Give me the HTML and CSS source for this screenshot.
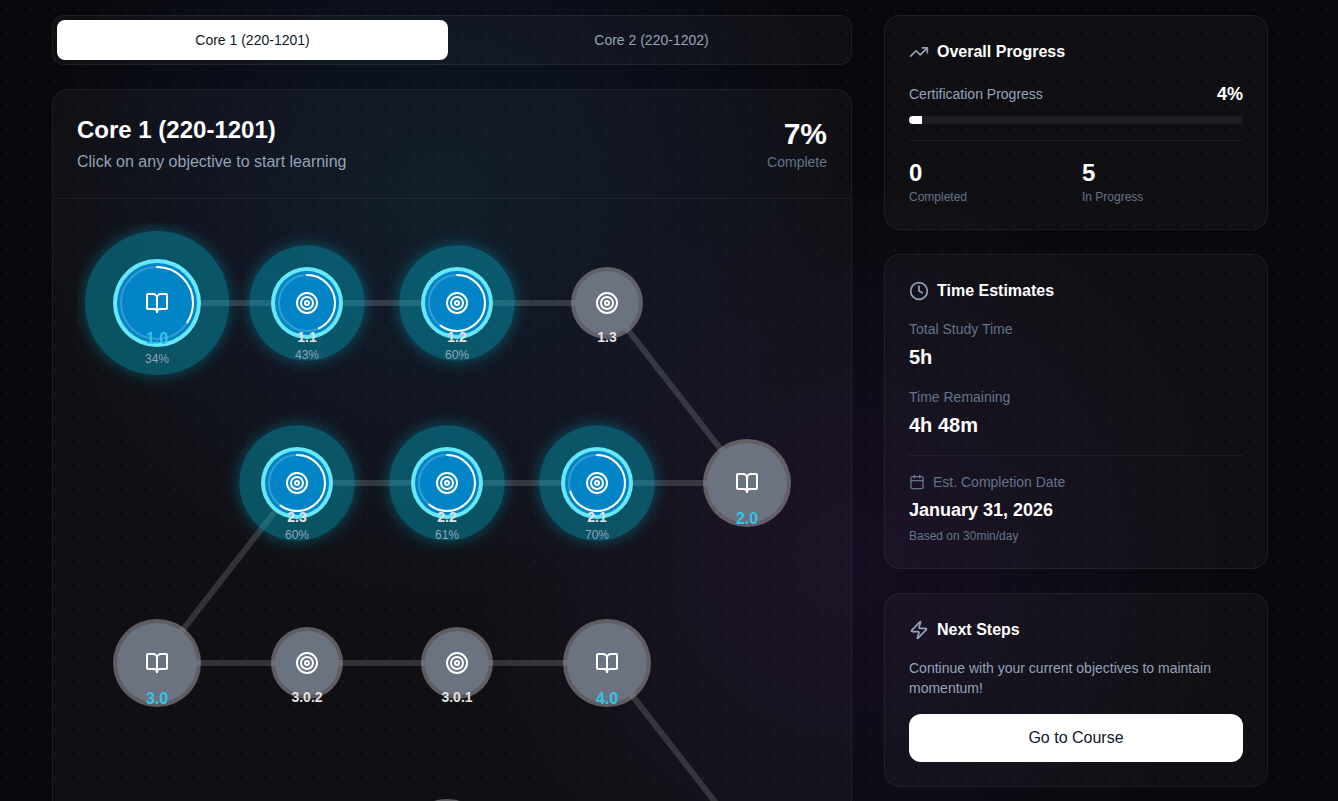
FILE: index.html
```html
<!DOCTYPE html>
<html lang="en">
<head>
    <meta charset="UTF-8">
    <meta name="viewport" content="width=device-width, initial-scale=1.0">
    <title>Core 1 (220-1201)</title>
    <link rel="stylesheet" href="styles.css">
</head>
<body>
    <div class="container">
        <main class="main">
            <div class="tabs panel" role="tablist">
                <button class="tab active" role="tab" aria-selected="true">Core 1 (220-1201)</button>
                <button class="tab" role="tab" aria-selected="false">Core 2 (220-1202)</button>
            </div>

            <section class="card panel">
                <header class="card-header">
                    <div>
                        <h1>Core 1 (220-1201)</h1>
                        <p class="subtitle">Click on any objective to start learning</p>
                    </div>
                    <div class="complete">
                        <div class="complete-value">7%</div>
                        <div class="complete-label">Complete</div>
                    </div>
                </header>
                <div class="roadmap">
                    <svg id="map" viewBox="0 0 750 700" role="img" aria-label="Objective roadmap">
                        <defs>
                            <filter id="glow" x="-50%" y="-50%" width="200%" height="200%">
                                <feGaussianBlur stdDeviation="8" result="blur"/>
                                <feMerge>
                                    <feMergeNode in="blur"/>
                                    <feMergeNode in="SourceGraphic"/>
                                </feMerge>
                            </filter>
                            <symbol id="book" viewBox="0 0 24 24">
                                <path d="M12 7v14"/>
                                <path d="M3 18a1 1 0 0 1-1-1V4a1 1 0 0 1 1-1h5a4 4 0 0 1 4 4 4 4 0 0 1 4-4h5a1 1 0 0 1 1 1v13a1 1 0 0 1-1 1h-6a3 3 0 0 0-3 3 3 3 0 0 0-3-3z"/>
                            </symbol>
                            <symbol id="target" viewBox="0 0 24 24">
                                <circle cx="12" cy="12" r="10"/>
                                <circle cx="12" cy="12" r="6"/>
                                <circle cx="12" cy="12" r="2"/>
                            </symbol>
                        </defs>
                    </svg>
                </div>
            </section>
        </main>

        <aside class="sidebar">
            <section class="side-card panel">
                <h2>
                    <svg class="icon" viewBox="0 0 24 24"><path d="M22 7 13.5 15.5 8.5 10.5 2 17"/><path d="M16 7h6v6"/></svg>
                    Overall Progress
                </h2>
                <div class="row">
                    <span class="muted">Certification Progress</span>
                    <span class="percent">4%</span>
                </div>
                <div class="bar"><div class="bar-fill" style="width: 4%"></div></div>
                <div class="stats">
                    <div>
                        <div class="stat-value">0</div>
                        <div class="small">Completed</div>
                    </div>
                    <div>
                        <div class="stat-value">5</div>
                        <div class="small">In Progress</div>
                    </div>
                </div>
            </section>

            <section class="side-card panel">
                <h2>
                    <svg class="icon" viewBox="0 0 24 24"><circle cx="12" cy="12" r="10"/><path d="M12 6v6l4 2"/></svg>
                    Time Estimates
                </h2>
                <div class="estimates">
                    <div>
                        <div class="label">Total Study Time</div>
                        <div class="value">5h</div>
                    </div>
                    <div>
                        <div class="label">Time Remaining</div>
                        <div class="value">4h 48m</div>
                    </div>
                    <div class="completion">
                        <div class="label with-icon">
                            <svg class="icon-small" viewBox="0 0 24 24"><path d="M8 2v4M16 2v4M3 10h18"/><rect x="3" y="4" width="18" height="18" rx="2"/></svg>
                            Est. Completion Date
                        </div>
                        <div class="date">January 31, 2026</div>
                        <div class="small">Based on 30min/day</div>
                    </div>
                </div>
            </section>

            <section class="side-card panel">
                <h2>
                    <svg class="icon" viewBox="0 0 24 24"><path d="M4 14a1 1 0 0 1-.78-1.63l9.9-10.2a.5.5 0 0 1 .86.46l-1.92 6.02A1 1 0 0 0 13 10h7a1 1 0 0 1 .78 1.63l-9.9 10.2a.5.5 0 0 1-.86-.46l1.92-6.02A1 1 0 0 0 11 14z"/></svg>
                    Next Steps
                </h2>
                <p class="muted">Continue with your current objectives to maintain momentum!</p>
                <button class="go">Go to Course</button>
            </section>
        </aside>
    </div>

<script src="script.js"></script>
</body>
</html>
```

FILE: styles.css
```css
* {
    box-sizing: border-box;
}

body {
    margin: 0;
    padding: 15px 18px 0 0;
    min-height: 100vh;
    background:
        radial-gradient(circle at 7px 10px, rgba(200, 210, 255, 0.05) 1px, transparent 1px) 0 0 / 24px 24px,
        radial-gradient(circle at 440px 200px, rgba(14, 100, 160, 0.15), rgba(30, 64, 150, 0.1) 220px, transparent 400px),
        radial-gradient(circle at 850px 560px, rgba(100, 30, 150, 0.15), rgba(80, 40, 140, 0.08) 200px, transparent 380px),
        #09090d;
    font-family: "Liberation Sans", Arial, sans-serif;
    color: #fff;
}

h1, h2, p {
    margin: 0;
}

button {
    font-family: inherit;
    cursor: pointer;
    border: none;
}

svg {
    fill: none;
    stroke-linecap: round;
    stroke-linejoin: round;
}

.container {
    max-width: 1280px;
    margin: 0 auto;
    padding: 0 32px;
    display: grid;
    grid-template-columns: repeat(3, 1fr);
    gap: 32px;
}

.main {
    grid-column: span 2;
}

.panel {
    background: rgba(255, 255, 255, 0.03);
    border: 1px solid rgba(255, 255, 255, 0.06);
    border-radius: 16px;
}

.tabs {
    display: flex;
    gap: 8px;
    padding: 4px;
    margin-bottom: 24px;
    border-radius: 12px;
}

.tab {
    flex: 1;
    height: 40px;
    border-radius: 8px;
    background: transparent;
    color: #94a3b8;
    font-size: 14px;
}

.tab.active {
    background: #fff;
    color: #0f172a;
}

.card-header {
    display: flex;
    justify-content: space-between;
    align-items: center;
    padding: 24px;
    border-bottom: 1px solid rgba(255, 255, 255, 0.06);
}

h1 {
    font-size: 24px;
    line-height: 32px;
    margin-bottom: 4px;
}

.subtitle {
    font-size: 16px;
    line-height: 24px;
    color: #94a3b8;
}

.complete {
    text-align: right;
}

.complete-value {
    font-size: 30px;
    line-height: 36px;
    font-weight: bold;
}

.complete-label {
    font-size: 14px;
    line-height: 20px;
    color: #64748b;
}

.roadmap {
    padding: 24px;
}

.roadmap svg {
    display: block;
    width: 100%;
}

/* roadmap nodes */
.link {
    stroke: rgba(255, 255, 255, 0.15);
    stroke-width: 6;
}

.halo {
    fill: #06b6d4;
    opacity: 0.4;
}

.ring {
    fill: rgba(160, 156, 160, 0.55);
}

.disc {
    fill: #6b7280;
}

.started .ring {
    fill: #67e8f9;
}

.started .disc {
    fill: #0284c7;
}

.track {
    stroke: rgba(255, 255, 255, 0.2);
    stroke-width: 2;
}

.arc {
    stroke: #fff;
    stroke-width: 2;
}

.glyph {
    stroke: #fff;
    stroke-width: 2;
}

.name {
    fill: #e2e2e2;
    font-size: 14px;
    font-weight: bold;
    text-anchor: middle;
}

.major .name {
    fill: #33c3e8;
    font-size: 16px;
}

.done {
    fill: #94a3b8;
    font-size: 12px;
    text-anchor: middle;
}

/* sidebar */
.sidebar {
    display: flex;
    flex-direction: column;
    gap: 24px;
}

.side-card {
    padding: 24px;
}

h2 {
    display: flex;
    align-items: center;
    gap: 8px;
    font-size: 16px;
    line-height: 24px;
    margin-bottom: 16px;
}

.icon {
    width: 20px;
    height: 20px;
    stroke: #94a3b8;
    stroke-width: 2;
}

.icon-small {
    width: 16px;
    height: 16px;
    stroke: #64748b;
    stroke-width: 2;
}

.row {
    display: flex;
    justify-content: space-between;
    align-items: center;
    margin-bottom: 8px;
}

.muted {
    font-size: 14px;
    line-height: 20px;
    color: #94a3b8;
}

.percent {
    font-size: 18px;
    line-height: 28px;
    font-weight: bold;
}

.bar {
    height: 8px;
    border-radius: 4px;
    background: rgba(255, 255, 255, 0.06);
    overflow: hidden;
}

.bar-fill {
    height: 100%;
    background: #fff;
}

.stats {
    display: grid;
    grid-template-columns: 1fr 1fr;
    gap: 12px;
    margin-top: 16px;
    padding-top: 16px;
    border-top: 1px solid rgba(255, 255, 255, 0.06);
}

.stat-value {
    font-size: 24px;
    line-height: 32px;
    font-weight: bold;
}

.small {
    font-size: 12px;
    line-height: 16px;
    color: #64748b;
}

.estimates {
    display: flex;
    flex-direction: column;
    gap: 16px;
}

.label {
    font-size: 14px;
    line-height: 20px;
    color: #64748b;
    margin-bottom: 4px;
}

.with-icon {
    display: flex;
    align-items: center;
    gap: 8px;
}

.value {
    font-size: 20px;
    line-height: 28px;
    font-weight: bold;
}

.completion {
    padding-top: 16px;
    border-top: 1px solid rgba(255, 255, 255, 0.06);
}

.date {
    font-size: 18px;
    line-height: 28px;
    font-weight: bold;
    margin-bottom: 4px;
}

.go {
    width: 100%;
    height: 48px;
    margin-top: 16px;
    border-radius: 12px;
    background: #fff;
    color: #0f172a;
    font-size: 16px;
}
```

FILE: script.js
```js
const nodes = [
    { name: "1.0", x: 80, y: 80, major: true, done: 34 },
    { name: "1.1", x: 230, y: 80, done: 43 },
    { name: "1.2", x: 380, y: 80, done: 60 },
    { name: "1.3", x: 530, y: 80 },
    { name: "2.0", x: 670, y: 260, major: true },
    { name: "2.1", x: 520, y: 260, done: 70 },
    { name: "2.2", x: 370, y: 260, done: 61 },
    { name: "2.3", x: 220, y: 260, done: 60 },
    { name: "3.0", x: 80, y: 440, major: true },
    { name: "3.0.2", x: 230, y: 440 },
    { name: "3.0.1", x: 380, y: 440 },
    { name: "4.0", x: 530, y: 440, major: true },
    { x: 670, y: 620 },
    { x: 520, y: 620 },
    { x: 370, y: 620, major: true }
];

const map = document.getElementById("map");

function add(parent, tag, attrs, text) {
    const el = document.createElementNS("http://www.w3.org/2000/svg", tag);
    for (const key in attrs) el.setAttribute(key, attrs[key]);
    if (text) el.textContent = text;
    parent.appendChild(el);
    return el;
}

// connecting lines stop at the edge of each disc
for (let i = 1; i < nodes.length; i++) {
    const a = nodes[i - 1];
    const b = nodes[i];
    const len = Math.hypot(b.x - a.x, b.y - a.y);
    const ux = (b.x - a.x) / len;
    const uy = (b.y - a.y) / len;
    const ra = a.major ? 40 : 32;
    const rb = b.major ? 40 : 32;
    add(map, "path", {
        class: "link",
        d: `M${a.x + ux * ra} ${a.y + uy * ra}L${b.x - ux * rb} ${b.y - uy * rb}`
    });
}

nodes.forEach(n => {
    const r = n.major ? 40 : 32;
    const g = add(map, "g", {
        class: "node" + (n.major ? " major" : "") + (n.done ? " started" : ""),
        transform: `translate(${n.x} ${n.y})`
    });
    if (n.done) {
        add(g, "circle", { class: "halo", r: r * 1.8, filter: "url(#glow)" });
    }
    add(g, "circle", { class: "ring", r: r + 4 });
    add(g, "circle", { class: "disc", r: r });
    if (n.done) {
        add(g, "circle", { class: "track", r: r - 4 });
        add(g, "circle", {
            class: "arc",
            r: r - 4,
            pathLength: 100,
            "stroke-dasharray": `${n.done} 100`,
            transform: "rotate(-90)"
        });
    }
    add(g, "use", {
        class: "glyph",
        href: n.major ? "#book" : "#target",
        x: -12, y: -12, width: 24, height: 24
    });
    if (n.name) {
        add(g, "text", { class: "name", y: n.major ? 41 : 39 }, n.name);
    }
    if (n.done) {
        add(g, "text", { class: "done", y: n.major ? 60 : 56 }, n.done + "%");
    }
});
```
